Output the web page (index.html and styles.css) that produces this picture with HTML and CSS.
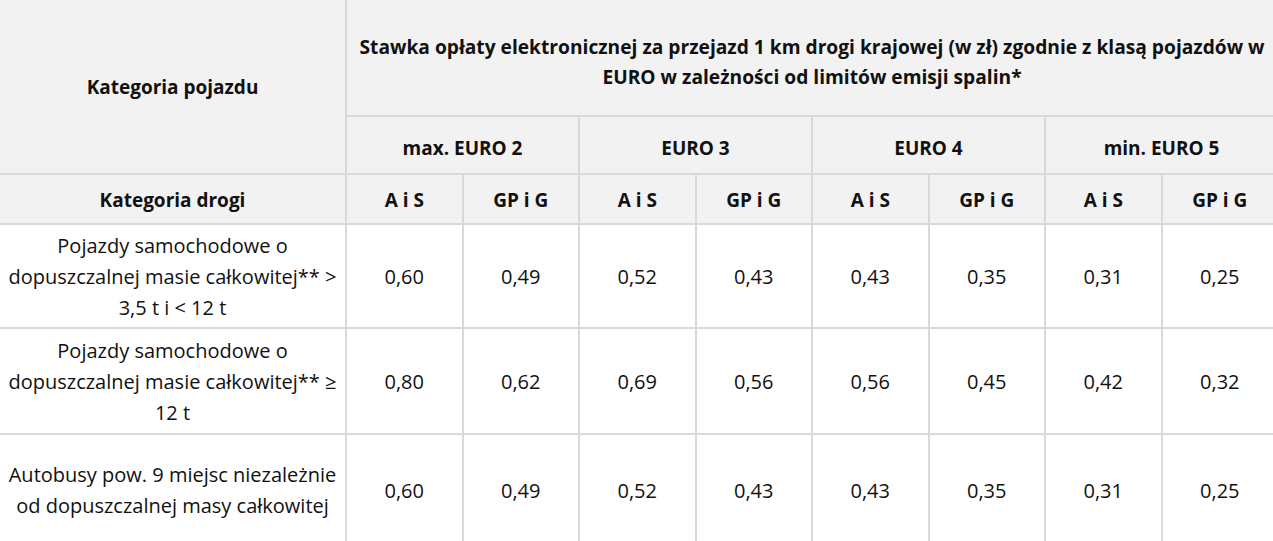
FILE: index.html
```html
<!DOCTYPE html>
<html lang="pl">
<head>
<meta charset="utf-8">
<title>Stawki opłaty elektronicznej</title>
<link rel="stylesheet" href="styles.css">
</head>
<body>
<table class="rates">
  <colgroup>
    <col class="col-cat">
    <col class="col-val"><col class="col-val"><col class="col-val"><col class="col-val">
    <col class="col-val"><col class="col-val"><col class="col-val"><col class="col-val">
  </colgroup>
  <thead>
    <tr class="row-title">
      <th rowspan="2" class="cat-head">Kategoria pojazdu</th>
      <th colspan="8" class="title">Stawka opłaty elektronicznej za przejazd 1 km drogi krajowej (w zł) zgodnie z klasą pojazdów w EURO w zależności od limitów emisji spalin*</th>
    </tr>
    <tr class="row-euro">
      <th colspan="2">max. EURO 2</th>
      <th colspan="2">EURO 3</th>
      <th colspan="2">EURO 4</th>
      <th colspan="2">min. EURO 5</th>
    </tr>
    <tr class="row-road">
      <th>Kategoria drogi</th>
      <th>A i S</th><th>GP i G</th>
      <th>A i S</th><th>GP i G</th>
      <th>A i S</th><th>GP i G</th>
      <th>A i S</th><th>GP i G</th>
    </tr>
  </thead>
  <tbody>
    <tr class="row-a">
      <td class="cat">Pojazdy samochodowe o dopuszczalnej masie całkowitej** &gt; 3,5 t i &lt; 12 t</td>
      <td>0,60</td><td>0,49</td><td>0,52</td><td>0,43</td><td>0,43</td><td>0,35</td><td>0,31</td><td>0,25</td>
    </tr>
    <tr class="row-b">
      <td class="cat">Pojazdy samochodowe o dopuszczalnej masie całkowitej** ≥ 12 t</td>
      <td>0,80</td><td>0,62</td><td>0,69</td><td>0,56</td><td>0,56</td><td>0,45</td><td>0,42</td><td>0,32</td>
    </tr>
    <tr class="row-c">
      <td class="cat">Autobusy pow. 9 miejsc niezależnie od dopuszczalnej masy całkowitej</td>
      <td>0,60</td><td>0,49</td><td>0,52</td><td>0,43</td><td>0,43</td><td>0,35</td><td>0,31</td><td>0,25</td>
    </tr>
  </tbody>
</table>
</body>
</html>
```

FILE: styles.css
```css
html, body {
  margin: 0;
  padding: 0;
  overflow: hidden;
  background: #ffffff;
}

body {
  width: 1273px;
  height: 541px;
  font-family: "Open Sans", "Noto Sans", "Liberation Sans", sans-serif;
  color: #111111;
}

.rates {
  border-collapse: collapse;
  table-layout: fixed;
  width: 1278px;
}

.col-cat { width: 346px; }
.col-val { width: 116.5px; }

.rates th,
.rates td {
  border: 2px solid #d9d9d9;
  text-align: center;
  vertical-align: middle;
  padding: 0 2px;
}

.rates thead th {
  background: #f2f2f2;
  font-weight: 700;
  font-size: 19px;
  line-height: 26px;
}

.rates tr:first-child th { border-top: none; }
.rates th:first-child, .rates td:first-child { border-left: none; }

.row-title { height: 116px; }
.rates thead .title {
  font-size: 19.2px;
  line-height: 30px;
  padding: 8px 2px 0;
}
.row-euro { height: 58px; }
.row-euro th { padding-top: 5px; }
.row-road { height: 50px; }
.row-road th { padding-top: 1px; }

.rates tbody td {
  font-size: 20px;
  line-height: 31px;
  background: #ffffff;
}

.row-a { height: 104px; }
.row-b { height: 106px; }
.row-c { height: 112px; }
```
